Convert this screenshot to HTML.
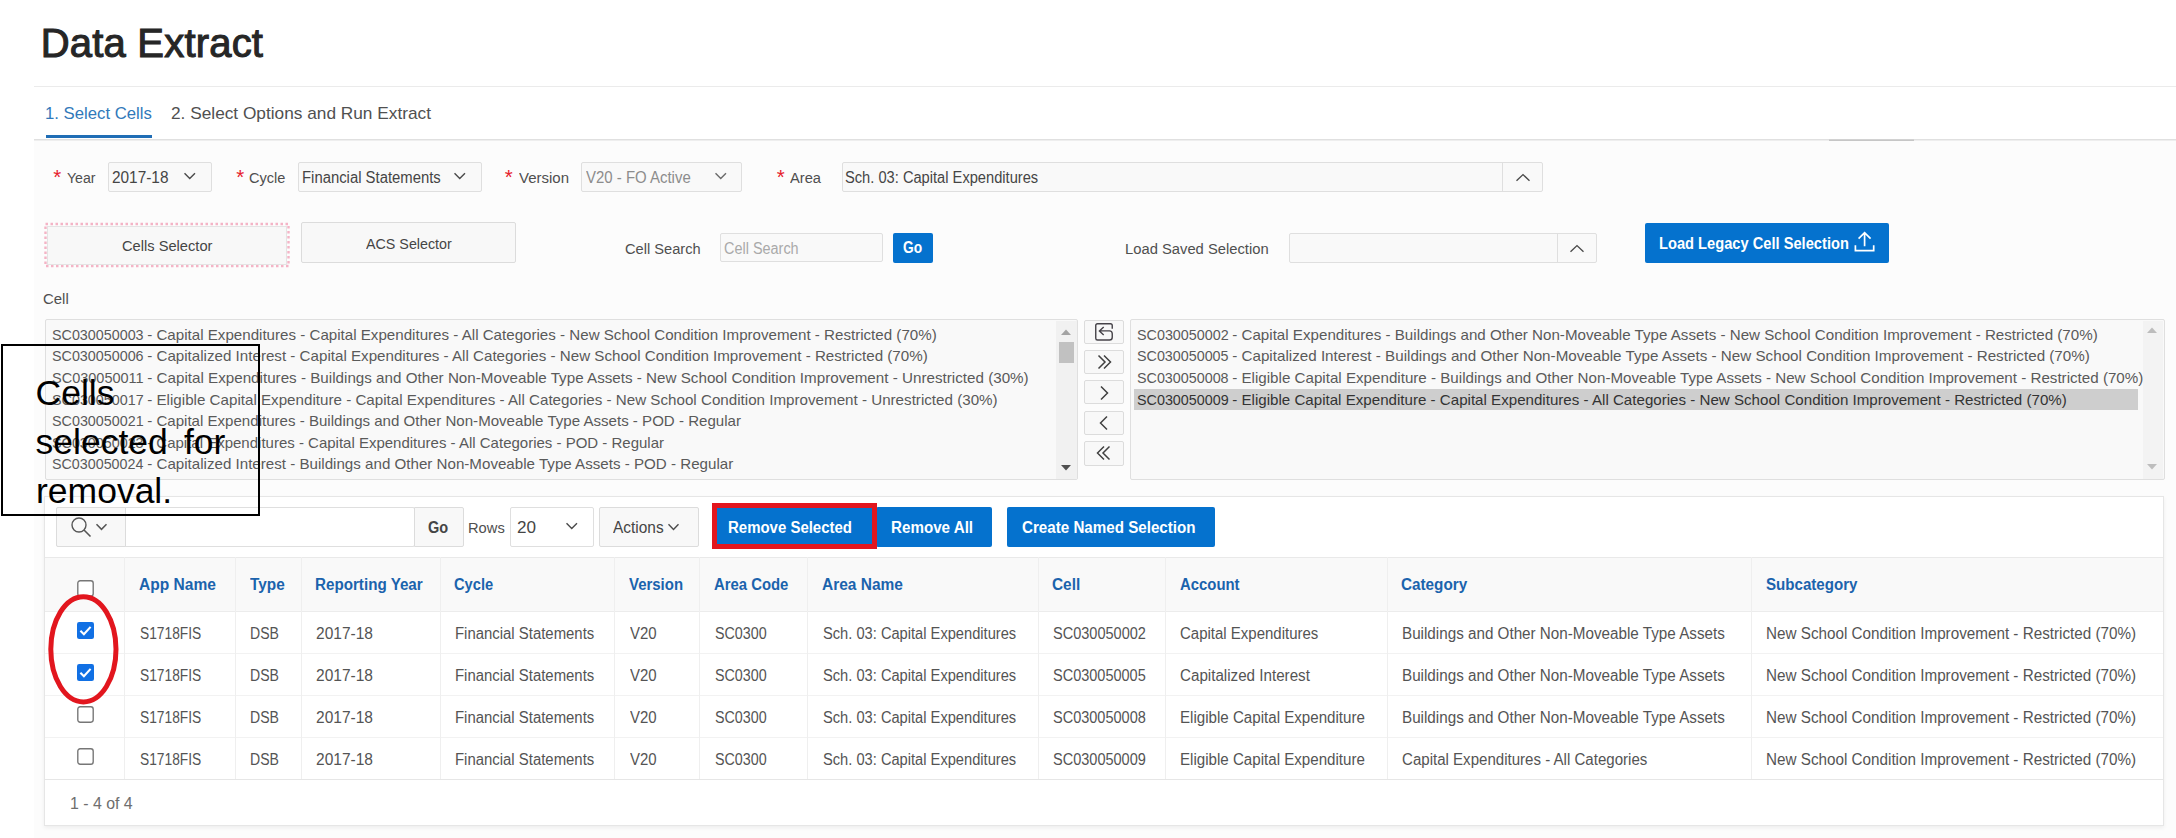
<!DOCTYPE html>
<html lang="en">
<head>
<meta charset="utf-8">
<title>Data Extract</title>
<style>
html,body{margin:0;padding:0;background:#fff;}
body{width:2176px;height:838px;position:relative;overflow:hidden;font-family:"Liberation Sans",sans-serif;}
.t{position:absolute;white-space:nowrap;display:block;transform-origin:0 50%;}
h1.t{margin:0;font-weight:normal;}
.b{position:absolute;box-sizing:border-box;}
.fld{background:#f9f9f9;border:1px solid #dfdfdf;border-radius:2px;}
.btn{background:#f8f8f8;border:1px solid #dcdcdc;border-radius:2px;}
.hot{background:#0572ce;border-radius:2px;}
svg{position:absolute;overflow:visible;}
</style>
</head>
<body>
<div class="b " style="left:34px;top:140px;width:2142px;height:698px;background:#fcfcfc;"></div>
<div class="b " style="left:34px;top:86px;width:2142px;height:1px;background:#ebebeb;"></div>
<div class="b " style="left:34px;top:139px;width:2142px;height:1px;background:#e0e0e0;"></div>
<div class="b " style="left:34px;top:140px;width:2142px;height:1px;background:#eeeeee;"></div>
<h1 class="t" style="left:40.72px;top:15.00px;font-size:40px;line-height:56px;color:#262626;letter-spacing:0.198px;-webkit-text-stroke:1.05px #262626;">Data Extract</h1>
<span class="t" style="left:44.73px;top:101.50px;font-size:17px;line-height:24px;color:#3179ba;transform:scaleX(0.9835);">1. Select Cells</span>
<span class="t" style="left:171.14px;top:101.50px;font-size:17px;line-height:24px;color:#505050;transform:scaleX(1.0152);">2. Select Options and Run Extract</span>
<div class="b " style="left:45.5px;top:135.2px;width:106.5px;height:3.0px;background:#1f6db5;"></div>
<div class="b " style="left:1829px;top:139px;width:85px;height:1px;background:#d2d2d2;"></div>
<div class="b " style="left:1829px;top:140px;width:85px;height:1px;background:#c6c6c6;"></div>
<span class="t" style="left:53.17px;top:162.10px;font-size:20.5px;line-height:29px;color:#e6202c;">*</span>
<span class="t" style="left:66.69px;top:166.50px;font-size:15.5px;line-height:22px;color:#4f4f4f;transform:scaleX(0.9110);">Year</span>
<div class="b fld" style="left:107.5px;top:162px;width:104.0px;height:30px;"></div>
<span class="t" style="left:112.23px;top:166.50px;font-size:16px;line-height:22px;color:#454545;transform:scaleX(0.9610);">2017-18</span>
<svg style="left:184.25px;top:173.1px" width="11.5" height="6.2" viewBox="0 0 11.5 6.2"><path d="M0.5 0.3 L5.75 5.6000000000000005 L11.0 0.3" fill="none" stroke="#4a4a4a" stroke-width="1.4"/></svg>
<span class="t" style="left:236.17px;top:162.10px;font-size:20.5px;line-height:29px;color:#e6202c;">*</span>
<span class="t" style="left:249.27px;top:166.50px;font-size:15.5px;line-height:22px;color:#4f4f4f;transform:scaleX(0.9385);">Cycle</span>
<div class="b fld" style="left:298px;top:162px;width:183.5px;height:30px;"></div>
<span class="t" style="left:301.78px;top:166.50px;font-size:16px;line-height:22px;color:#454545;transform:scaleX(0.9287);">Financial Statements</span>
<svg style="left:454.25px;top:173.1px" width="11.5" height="6.2" viewBox="0 0 11.5 6.2"><path d="M0.5 0.3 L5.75 5.6000000000000005 L11.0 0.3" fill="none" stroke="#4a4a4a" stroke-width="1.4"/></svg>
<span class="t" style="left:504.67px;top:162.10px;font-size:20.5px;line-height:29px;color:#e6202c;">*</span>
<span class="t" style="left:518.94px;top:166.50px;font-size:15.5px;line-height:22px;color:#4f4f4f;transform:scaleX(0.9676);">Version</span>
<div class="b fld" style="left:581px;top:162px;width:161px;height:30px;"></div>
<span class="t" style="left:585.94px;top:166.50px;font-size:16px;line-height:22px;color:#8c8c8c;transform:scaleX(0.9347);">V20 - FO Active</span>
<svg style="left:714.75px;top:173.1px" width="11.5" height="6.2" viewBox="0 0 11.5 6.2"><path d="M0.5 0.3 L5.75 5.6000000000000005 L11.0 0.3" fill="none" stroke="#6a6a6a" stroke-width="1.4"/></svg>
<span class="t" style="left:776.67px;top:162.10px;font-size:20.5px;line-height:29px;color:#e6202c;">*</span>
<span class="t" style="left:789.97px;top:166.50px;font-size:15.5px;line-height:22px;color:#4f4f4f;transform:scaleX(0.9474);">Area</span>
<div class="b fld" style="left:841.5px;top:162px;width:701.0px;height:30px;"></div>
<div class="b " style="left:1502px;top:162px;width:1px;height:30px;background:#dfdfdf;"></div>
<span class="t" style="left:845.34px;top:166.50px;font-size:16px;line-height:22px;color:#454545;transform:scaleX(0.9165);">Sch. 03: Capital Expenditures</span>
<svg style="left:1515.5px;top:173.5px" width="14" height="7" viewBox="0 0 14 7"><path d="M0.5 6.7 L7.0 0.6 L13.5 6.7" fill="none" stroke="#4a4a4a" stroke-width="1.4"/></svg>
<svg style="left:43px;top:221px" width="250" height="48" viewBox="43 221 250 48"><rect x="45.5" y="224" width="243" height="42" fill="none" stroke="#f4b4c6" stroke-width="2.4" stroke-dasharray="2.5 2.5"/></svg>
<div class="b " style="left:47px;top:225.5px;width:240px;height:39.0px;background:#f8f8f8;border:1px solid #e4e4e4;"></div>
<span class="t" style="left:122.27px;top:235.00px;font-size:15.5px;line-height:22px;color:#454545;transform:scaleX(0.9461);">Cells Selector</span>
<div class="b btn" style="left:300.5px;top:222px;width:215.5px;height:40.5px;"></div>
<span class="t" style="left:365.97px;top:232.50px;font-size:15.5px;line-height:22px;color:#454545;transform:scaleX(0.9218);">ACS Selector</span>
<span class="t" style="left:625.27px;top:237.50px;font-size:15.5px;line-height:22px;color:#4f4f4f;transform:scaleX(0.9444);">Cell Search</span>
<div class="b fld" style="left:720px;top:232.5px;width:163px;height:29.5px;"></div>
<span class="t" style="left:724.28px;top:237.50px;font-size:16px;line-height:22px;color:#a9a9a9;transform:scaleX(0.9026);">Cell Search</span>
<div class="b hot" style="left:893px;top:232.5px;width:40px;height:30.0px;"></div>
<span class="t" style="left:903.43px;top:236.50px;font-size:16px;line-height:22px;color:#ffffff;transform:scaleX(0.8600);font-weight:bold;">Go</span>
<span class="t" style="left:1124.79px;top:237.50px;font-size:15.5px;line-height:22px;color:#4f4f4f;transform:scaleX(0.9526);">Load Saved Selection</span>
<div class="b fld" style="left:1288.5px;top:232.5px;width:308.5px;height:30.0px;"></div>
<div class="b " style="left:1557px;top:232.5px;width:1px;height:30.0px;background:#dfdfdf;"></div>
<svg style="left:1570.0px;top:244.5px" width="14" height="7" viewBox="0 0 14 7"><path d="M0.5 6.7 L7.0 0.6 L13.5 6.7" fill="none" stroke="#4a4a4a" stroke-width="1.4"/></svg>
<div class="b hot" style="left:1644.5px;top:222.5px;width:244.5px;height:40.0px;"></div>
<span class="t" style="left:1659.03px;top:232.50px;font-size:16px;line-height:22px;color:#ffffff;transform:scaleX(0.9165);font-weight:bold;">Load Legacy Cell Selection</span>
<svg style="left:1854px;top:231px" width="22" height="22" viewBox="0 0 22 22"><path d="M10.6 15.2 V1.8 M4.6 7.6 L10.6 1.6 L16.6 7.6 M1.4 14.3 V19.6 H19.7 V14.3" fill="none" stroke="#fff" stroke-width="1.7"/></svg>
<span class="t" style="left:43.25px;top:288.40px;font-size:15px;line-height:21px;color:#4f4f4f;transform:scaleX(0.9956);">Cell</span>
<div class="b fld" style="left:44.5px;top:319px;width:1033.5px;height:160.5px;"></div>
<span class="t" style="left:51.66px;top:323.80px;font-size:15px;line-height:21px;color:#5a5a5a;transform:scaleX(0.9546)">SC030050003</span><span class="t" style="left:143.22px;top:323.80px;font-size:15px;line-height:21px;color:#5a5a5a;transform:scaleX(1.0085);white-space:pre"> - Capital Expenditures - Capital Expenditures - All Categories - New School Condition Improvement - Restricted (70%)</span>
<span class="t" style="left:51.66px;top:345.40px;font-size:15px;line-height:21px;color:#5a5a5a;transform:scaleX(0.9546)">SC030050006</span><span class="t" style="left:143.22px;top:345.40px;font-size:15px;line-height:21px;color:#5a5a5a;transform:scaleX(1.0099);white-space:pre"> - Capitalized Interest - Capital Expenditures - All Categories - New School Condition Improvement - Restricted (70%)</span>
<span class="t" style="left:51.65px;top:367.00px;font-size:15px;line-height:21px;color:#5a5a5a;transform:scaleX(0.9668)">SC030050011</span><span class="t" style="left:143.30px;top:367.00px;font-size:15px;line-height:21px;color:#5a5a5a;transform:scaleX(1.0130);white-space:pre"> - Capital Expenditures - Buildings and Other Non-Moveable Type Assets - New School Condition Improvement - Unrestricted (30%)</span>
<span class="t" style="left:51.65px;top:388.60px;font-size:15px;line-height:21px;color:#5a5a5a;transform:scaleX(0.9557)">SC030050017</span><span class="t" style="left:143.33px;top:388.60px;font-size:15px;line-height:21px;color:#5a5a5a;transform:scaleX(1.0109);white-space:pre"> - Eligible Capital Expenditure - Capital Expenditures - All Categories - New School Condition Improvement - Unrestricted (30%)</span>
<span class="t" style="left:51.66px;top:410.20px;font-size:15px;line-height:21px;color:#5a5a5a;transform:scaleX(0.9554)">SC030050021</span><span class="t" style="left:143.30px;top:410.20px;font-size:15px;line-height:21px;color:#5a5a5a;transform:scaleX(1.0049);white-space:pre"> - Capital Expenditures - Buildings and Other Non-Moveable Type Assets - POD - Regular</span>
<span class="t" style="left:51.66px;top:431.80px;font-size:15px;line-height:21px;color:#5a5a5a;transform:scaleX(0.9546)">SC030050023</span><span class="t" style="left:143.22px;top:431.80px;font-size:15px;line-height:21px;color:#5a5a5a;transform:scaleX(0.9999);white-space:pre"> - Capital Expenditures - Capital Expenditures - All Categories - POD - Regular</span>
<span class="t" style="left:51.66px;top:453.40px;font-size:15px;line-height:21px;color:#5a5a5a;transform:scaleX(0.9525)">SC030050024</span><span class="t" style="left:143.02px;top:453.40px;font-size:15px;line-height:21px;color:#5a5a5a;transform:scaleX(1.0089);white-space:pre"> - Capitalized Interest - Buildings and Other Non-Moveable Type Assets - POD - Regular</span>
<div class="b " style="left:1056px;top:320.5px;width:21px;height:158.0px;background:#f1f1f1;"></div>
<div class="b " style="left:1058.5px;top:341.5px;width:15.5px;height:21.0px;background:#c1c1c1;"></div>
<svg style="left:1061px;top:328.5px" width="10" height="6" viewBox="0 0 10 6"><path d="M0 6 L5 0.5 L10 6Z" fill="#a3a3a3"/></svg>
<svg style="left:1061px;top:464.5px" width="10" height="6" viewBox="0 0 10 6"><path d="M0 0 L5 5.5 L10 0Z" fill="#505050"/></svg>
<div class="b btn" style="left:1083.5px;top:319.5px;width:40.0px;height:24.0px;"></div>
<div class="b btn" style="left:1083.5px;top:349.5px;width:40.0px;height:24.0px;"></div>
<div class="b btn" style="left:1083.5px;top:380px;width:40.0px;height:24px;"></div>
<div class="b btn" style="left:1083.5px;top:410.5px;width:40.0px;height:24.0px;"></div>
<div class="b btn" style="left:1083.5px;top:441px;width:40.0px;height:24.5px;"></div>
<svg style="left:1095px;top:322.5px" width="18" height="18" viewBox="0 0 18 18"><path d="M17.25 5.7 V2.5 Q17.25 0.75 15.5 0.75 H2.5 Q0.75 0.75 0.75 2.5 V15.2 Q0.75 17 2.5 17 H14.5 Q17.25 17 17.25 14.2 V10.8 Q17.25 7.9 14.5 7.9 H4.6 M8.7 3.9 L4.4 7.9 L8.7 12" fill="none" stroke="#454248" stroke-width="1.4"/></svg>
<svg style="left:1095.7px;top:353.8px" width="16" height="16" viewBox="0 0 16 16"><path d="M2.5 1.5 L9 8 L2.5 14.5 M8 1.5 L14.5 8 L8 14.5" fill="none" stroke="#404040" stroke-width="1.5"/></svg>
<svg style="left:1095.8px;top:384.6px" width="16" height="16" viewBox="0 0 16 16"><path d="M5 1.5 L11.5 8 L5 14.5" fill="none" stroke="#404040" stroke-width="1.5"/></svg>
<svg style="left:1096.0px;top:414.8px" width="16" height="16" viewBox="0 0 16 16"><path d="M11 1.5 L4.5 8 L11 14.5" fill="none" stroke="#404040" stroke-width="1.5"/></svg>
<svg style="left:1095.8px;top:445.3px" width="16" height="16" viewBox="0 0 16 16"><path d="M13.5 1.5 L7 8 L13.5 14.5 M8 1.5 L1.5 8 L8 14.5" fill="none" stroke="#404040" stroke-width="1.5"/></svg>
<div class="b fld" style="left:1130px;top:319px;width:1035px;height:160.5px;"></div>
<div class="b " style="left:1134px;top:389px;width:1004px;height:21px;background:#cecece;"></div>
<span class="t" style="left:1136.55px;top:323.80px;font-size:15px;line-height:21px;color:#5a5a5a;transform:scaleX(0.9557)">SC030050002</span><span class="t" style="left:1228.23px;top:323.80px;font-size:15px;line-height:21px;color:#5a5a5a;transform:scaleX(1.0102);white-space:pre"> - Capital Expenditures - Buildings and Other Non-Moveable Type Assets - New School Condition Improvement - Restricted (70%)</span>
<span class="t" style="left:1136.56px;top:345.40px;font-size:15px;line-height:21px;color:#5a5a5a;transform:scaleX(0.9543)">SC030050005</span><span class="t" style="left:1228.10px;top:345.40px;font-size:15px;line-height:21px;color:#5a5a5a;transform:scaleX(1.0128);white-space:pre"> - Capitalized Interest - Buildings and Other Non-Moveable Type Assets - New School Condition Improvement - Restricted (70%)</span>
<span class="t" style="left:1136.56px;top:367.00px;font-size:15px;line-height:21px;color:#5a5a5a;transform:scaleX(0.9546)">SC030050008</span><span class="t" style="left:1228.12px;top:367.00px;font-size:15px;line-height:21px;color:#5a5a5a;transform:scaleX(1.0103);white-space:pre"> - Eligible Capital Expenditure - Buildings and Other Non-Moveable Type Assets - New School Condition Improvement - Restricted (70%)</span>
<span class="t" style="left:1136.56px;top:388.60px;font-size:15px;line-height:21px;color:#333;transform:scaleX(0.9553)">SC030050009</span><span class="t" style="left:1228.18px;top:388.60px;font-size:15px;line-height:21px;color:#333;transform:scaleX(1.0081);white-space:pre"> - Eligible Capital Expenditure - Capital Expenditures - All Categories - New School Condition Improvement - Restricted (70%)</span>
<div class="b " style="left:2143px;top:320.5px;width:20px;height:158.0px;background:#f3f3f3;"></div>
<svg style="left:2147px;top:327px" width="10" height="6" viewBox="0 0 10 6"><path d="M0 6 L5 0.5 L10 6Z" fill="#bdbdbd"/></svg>
<svg style="left:2147px;top:464px" width="10" height="6" viewBox="0 0 10 6"><path d="M0 0 L5 5.5 L10 0Z" fill="#bdbdbd"/></svg>
<div class="b " style="left:44px;top:496px;width:2119.5px;height:330px;background:#fff;border:1px solid #e6e6e6;box-shadow:0 2px 4px rgba(0,0,0,.06);"></div>
<div class="b " style="left:55.5px;top:507px;width:359.5px;height:40px;background:#fff;border:1px solid #dfdfdf;border-radius:2px;"></div>
<div class="b " style="left:55.5px;top:507px;width:70.5px;height:40px;background:#f8f8f8;border:1px solid #dcdcdc;border-radius:2px 0 0 2px;"></div>
<svg style="left:70px;top:516px" width="22" height="22" viewBox="0 0 22 22"><circle cx="9" cy="9" r="7" fill="none" stroke="#555" stroke-width="1.4"/><path d="M14 14 L20.5 20.5" stroke="#555" stroke-width="1.6"/></svg>
<svg style="left:95.5px;top:524.0px" width="11" height="6" viewBox="0 0 11 6"><path d="M0.5 0.3 L5.5 5.4 L10.5 0.3" fill="none" stroke="#555" stroke-width="1.5"/></svg>
<div class="b " style="left:414px;top:507px;width:50px;height:40px;background:#f8f8f8;border:1px solid #dcdcdc;border-radius:0 2px 2px 0;"></div>
<span class="t" style="left:428.40px;top:516.50px;font-size:16px;line-height:22px;color:#454545;transform:scaleX(0.9072);font-weight:bold;">Go</span>
<span class="t" style="left:467.80px;top:516.50px;font-size:15.5px;line-height:22px;color:#4f4f4f;transform:scaleX(0.9476);">Rows</span>
<div class="b " style="left:510px;top:507px;width:83.5px;height:40px;background:#fff;border:1px solid #dfdfdf;border-radius:2px;"></div>
<span class="t" style="left:517.15px;top:516.50px;font-size:16px;line-height:22px;color:#454545;transform:scaleX(1.0681);">20</span>
<svg style="left:565.75px;top:523.4px" width="11.5" height="6.2" viewBox="0 0 11.5 6.2"><path d="M0.5 0.3 L5.75 5.6000000000000005 L11.0 0.3" fill="none" stroke="#4a4a4a" stroke-width="1.4"/></svg>
<div class="b btn" style="left:599px;top:507px;width:100px;height:40px;"></div>
<span class="t" style="left:612.97px;top:516.50px;font-size:16px;line-height:22px;color:#454545;transform:scaleX(0.9642);">Actions</span>
<svg style="left:668.0px;top:523.5px" width="11" height="6" viewBox="0 0 11 6"><path d="M0.5 0.3 L5.5 5.4 L10.5 0.3" fill="none" stroke="#4a4a4a" stroke-width="1.4"/></svg>
<div class="b hot" style="left:714px;top:506px;width:162px;height:41px;"></div>
<span class="t" style="left:728.01px;top:516.50px;font-size:16px;line-height:22px;color:#fff;transform:scaleX(0.9356);font-weight:bold;">Remove Selected</span>
<div class="b hot" style="left:876px;top:507px;width:115.5px;height:40px;"></div>
<span class="t" style="left:891.00px;top:516.50px;font-size:16px;line-height:22px;color:#fff;transform:scaleX(0.9482);font-weight:bold;">Remove All</span>
<div class="b hot" style="left:1007px;top:507px;width:208px;height:40px;"></div>
<span class="t" style="left:1022.38px;top:516.50px;font-size:16px;line-height:22px;color:#fff;transform:scaleX(0.9475);font-weight:bold;">Create Named Selection</span>
<div class="b " style="left:711.5px;top:503px;width:165.0px;height:46px;border:5px solid #e2161e;"></div>
<div class="b " style="left:45px;top:557px;width:2118px;height:55px;background:#f9f9f9;border-top:1px solid #e9e9e9;border-bottom:1px solid #ececec;"></div>
<div class="b " style="left:45px;top:652.5px;width:2118px;height:1.0px;background:#f2f2f2;"></div>
<div class="b " style="left:45px;top:694.5px;width:2118px;height:1.0px;background:#f2f2f2;"></div>
<div class="b " style="left:45px;top:736.5px;width:2118px;height:1.0px;background:#f2f2f2;"></div>
<div class="b " style="left:45px;top:778.5px;width:2118px;height:1.0px;background:#e6e6e6;"></div>
<div class="b " style="left:124.0px;top:557px;width:1.0px;height:222px;background:#efefef;"></div>
<div class="b " style="left:234.5px;top:557px;width:1.0px;height:222px;background:#efefef;"></div>
<div class="b " style="left:300.5px;top:557px;width:1.0px;height:222px;background:#efefef;"></div>
<div class="b " style="left:440.0px;top:557px;width:1.0px;height:222px;background:#efefef;"></div>
<div class="b " style="left:614.0px;top:557px;width:1.0px;height:222px;background:#efefef;"></div>
<div class="b " style="left:699.0px;top:557px;width:1.0px;height:222px;background:#efefef;"></div>
<div class="b " style="left:806.5px;top:557px;width:1.0px;height:222px;background:#efefef;"></div>
<div class="b " style="left:1038.0px;top:557px;width:1.0px;height:222px;background:#efefef;"></div>
<div class="b " style="left:1164.5px;top:557px;width:1.0px;height:222px;background:#efefef;"></div>
<div class="b " style="left:1386.5px;top:557px;width:1.0px;height:222px;background:#efefef;"></div>
<div class="b " style="left:1751.0px;top:557px;width:1.0px;height:222px;background:#efefef;"></div>
<span class="t" style="left:139.13px;top:574.00px;font-size:16px;line-height:22px;color:#1b63ad;transform:scaleX(0.9720);font-weight:bold;">App Name</span>
<span class="t" style="left:249.83px;top:574.00px;font-size:16px;line-height:22px;color:#1b63ad;transform:scaleX(0.9594);font-weight:bold;">Type</span>
<span class="t" style="left:315.00px;top:574.00px;font-size:16px;line-height:22px;color:#1b63ad;transform:scaleX(0.9489);font-weight:bold;">Reporting Year</span>
<span class="t" style="left:454.40px;top:574.00px;font-size:16px;line-height:22px;color:#1b63ad;transform:scaleX(0.9159);font-weight:bold;">Cycle</span>
<span class="t" style="left:628.91px;top:574.00px;font-size:16px;line-height:22px;color:#1b63ad;transform:scaleX(0.9344);font-weight:bold;">Version</span>
<span class="t" style="left:714.14px;top:574.00px;font-size:16px;line-height:22px;color:#1b63ad;transform:scaleX(0.9293);font-weight:bold;">Area Code</span>
<span class="t" style="left:821.63px;top:574.00px;font-size:16px;line-height:22px;color:#1b63ad;transform:scaleX(0.9677);font-weight:bold;">Area Name</span>
<span class="t" style="left:1052.37px;top:574.00px;font-size:16px;line-height:22px;color:#1b63ad;transform:scaleX(0.9613);font-weight:bold;">Cell</span>
<span class="t" style="left:1179.64px;top:574.00px;font-size:16px;line-height:22px;color:#1b63ad;transform:scaleX(0.9302);font-weight:bold;">Account</span>
<span class="t" style="left:1401.37px;top:574.00px;font-size:16px;line-height:22px;color:#1b63ad;transform:scaleX(0.9547);font-weight:bold;">Category</span>
<span class="t" style="left:1765.58px;top:574.00px;font-size:16px;line-height:22px;color:#1b63ad;transform:scaleX(0.9441);font-weight:bold;">Subcategory</span>
<span class="t" style="left:139.88px;top:622.50px;font-size:16px;line-height:22px;color:#545454;transform:scaleX(0.8607);">S1718FIS</span>
<span class="t" style="left:249.85px;top:622.50px;font-size:16px;line-height:22px;color:#545454;transform:scaleX(0.8780);">DSB</span>
<span class="t" style="left:316.22px;top:622.50px;font-size:16px;line-height:22px;color:#545454;transform:scaleX(0.9697);">2017-18</span>
<span class="t" style="left:455.28px;top:622.50px;font-size:16px;line-height:22px;color:#545454;transform:scaleX(0.9321);">Financial Statements</span>
<span class="t" style="left:630.44px;top:622.50px;font-size:16px;line-height:22px;color:#545454;transform:scaleX(0.9355);">V20</span>
<span class="t" style="left:714.86px;top:622.50px;font-size:16px;line-height:22px;color:#545454;transform:scaleX(0.8939);">SC0300</span>
<span class="t" style="left:822.84px;top:622.50px;font-size:16px;line-height:22px;color:#545454;transform:scaleX(0.9165);">Sch. 03: Capital Expenditures</span>
<span class="t" style="left:1053.35px;top:622.50px;font-size:16px;line-height:22px;color:#545454;transform:scaleX(0.9079);">SC030050002</span>
<span class="t" style="left:1180.25px;top:622.50px;font-size:16px;line-height:22px;color:#545454;transform:scaleX(0.9366);">Capital Expenditures</span>
<span class="t" style="left:1401.75px;top:622.50px;font-size:16px;line-height:22px;color:#545454;transform:scaleX(0.9509);">Buildings and Other Non-Moveable Type Assets</span>
<span class="t" style="left:1765.75px;top:622.50px;font-size:16px;line-height:22px;color:#545454;transform:scaleX(0.9526);">New School Condition Improvement - Restricted (70%)</span>
<span class="t" style="left:139.88px;top:664.50px;font-size:16px;line-height:22px;color:#545454;transform:scaleX(0.8607);">S1718FIS</span>
<span class="t" style="left:249.85px;top:664.50px;font-size:16px;line-height:22px;color:#545454;transform:scaleX(0.8780);">DSB</span>
<span class="t" style="left:316.22px;top:664.50px;font-size:16px;line-height:22px;color:#545454;transform:scaleX(0.9697);">2017-18</span>
<span class="t" style="left:455.28px;top:664.50px;font-size:16px;line-height:22px;color:#545454;transform:scaleX(0.9321);">Financial Statements</span>
<span class="t" style="left:630.44px;top:664.50px;font-size:16px;line-height:22px;color:#545454;transform:scaleX(0.9355);">V20</span>
<span class="t" style="left:714.86px;top:664.50px;font-size:16px;line-height:22px;color:#545454;transform:scaleX(0.8939);">SC0300</span>
<span class="t" style="left:822.84px;top:664.50px;font-size:16px;line-height:22px;color:#545454;transform:scaleX(0.9165);">Sch. 03: Capital Expenditures</span>
<span class="t" style="left:1053.35px;top:664.50px;font-size:16px;line-height:22px;color:#545454;transform:scaleX(0.9066);">SC030050005</span>
<span class="t" style="left:1180.24px;top:664.50px;font-size:16px;line-height:22px;color:#545454;transform:scaleX(0.9482);">Capitalized Interest</span>
<span class="t" style="left:1401.75px;top:664.50px;font-size:16px;line-height:22px;color:#545454;transform:scaleX(0.9509);">Buildings and Other Non-Moveable Type Assets</span>
<span class="t" style="left:1765.75px;top:664.50px;font-size:16px;line-height:22px;color:#545454;transform:scaleX(0.9526);">New School Condition Improvement - Restricted (70%)</span>
<span class="t" style="left:139.88px;top:706.50px;font-size:16px;line-height:22px;color:#545454;transform:scaleX(0.8607);">S1718FIS</span>
<span class="t" style="left:249.85px;top:706.50px;font-size:16px;line-height:22px;color:#545454;transform:scaleX(0.8780);">DSB</span>
<span class="t" style="left:316.22px;top:706.50px;font-size:16px;line-height:22px;color:#545454;transform:scaleX(0.9697);">2017-18</span>
<span class="t" style="left:455.28px;top:706.50px;font-size:16px;line-height:22px;color:#545454;transform:scaleX(0.9321);">Financial Statements</span>
<span class="t" style="left:630.44px;top:706.50px;font-size:16px;line-height:22px;color:#545454;transform:scaleX(0.9355);">V20</span>
<span class="t" style="left:714.86px;top:706.50px;font-size:16px;line-height:22px;color:#545454;transform:scaleX(0.8939);">SC0300</span>
<span class="t" style="left:822.84px;top:706.50px;font-size:16px;line-height:22px;color:#545454;transform:scaleX(0.9165);">Sch. 03: Capital Expenditures</span>
<span class="t" style="left:1053.35px;top:706.50px;font-size:16px;line-height:22px;color:#545454;transform:scaleX(0.9069);">SC030050008</span>
<span class="t" style="left:1179.76px;top:706.50px;font-size:16px;line-height:22px;color:#545454;transform:scaleX(0.9450);">Eligible Capital Expenditure</span>
<span class="t" style="left:1401.75px;top:706.50px;font-size:16px;line-height:22px;color:#545454;transform:scaleX(0.9509);">Buildings and Other Non-Moveable Type Assets</span>
<span class="t" style="left:1765.75px;top:706.50px;font-size:16px;line-height:22px;color:#545454;transform:scaleX(0.9526);">New School Condition Improvement - Restricted (70%)</span>
<span class="t" style="left:139.88px;top:748.50px;font-size:16px;line-height:22px;color:#545454;transform:scaleX(0.8607);">S1718FIS</span>
<span class="t" style="left:249.85px;top:748.50px;font-size:16px;line-height:22px;color:#545454;transform:scaleX(0.8780);">DSB</span>
<span class="t" style="left:316.22px;top:748.50px;font-size:16px;line-height:22px;color:#545454;transform:scaleX(0.9697);">2017-18</span>
<span class="t" style="left:455.28px;top:748.50px;font-size:16px;line-height:22px;color:#545454;transform:scaleX(0.9321);">Financial Statements</span>
<span class="t" style="left:630.44px;top:748.50px;font-size:16px;line-height:22px;color:#545454;transform:scaleX(0.9355);">V20</span>
<span class="t" style="left:714.86px;top:748.50px;font-size:16px;line-height:22px;color:#545454;transform:scaleX(0.8939);">SC0300</span>
<span class="t" style="left:822.84px;top:748.50px;font-size:16px;line-height:22px;color:#545454;transform:scaleX(0.9165);">Sch. 03: Capital Expenditures</span>
<span class="t" style="left:1053.35px;top:748.50px;font-size:16px;line-height:22px;color:#545454;transform:scaleX(0.9075);">SC030050009</span>
<span class="t" style="left:1179.76px;top:748.50px;font-size:16px;line-height:22px;color:#545454;transform:scaleX(0.9450);">Eligible Capital Expenditure</span>
<span class="t" style="left:1402.25px;top:748.50px;font-size:16px;line-height:22px;color:#545454;transform:scaleX(0.9414);">Capital Expenditures - All Categories</span>
<span class="t" style="left:1765.75px;top:748.50px;font-size:16px;line-height:22px;color:#545454;transform:scaleX(0.9526);">New School Condition Improvement - Restricted (70%)</span>
<svg style="left:77px;top:579.5px" width="17" height="17" viewBox="0 0 16 16"><rect x="0.75" y="0.75" width="14.5" height="14.5" rx="2.2" fill="#fff" stroke="#767676" stroke-width="1.3"/></svg>
<svg style="left:77px;top:621.7px" width="17" height="17" viewBox="0 0 16 16"><rect x="0" y="0" width="16" height="16" rx="2" fill="#1170e4"/><path d="M3.2 8.3 L6.5 11.5 L12.8 4.6" fill="none" stroke="#fff" stroke-width="2"/></svg>
<svg style="left:77px;top:663.7px" width="17" height="17" viewBox="0 0 16 16"><rect x="0" y="0" width="16" height="16" rx="2" fill="#1170e4"/><path d="M3.2 8.3 L6.5 11.5 L12.8 4.6" fill="none" stroke="#fff" stroke-width="2"/></svg>
<svg style="left:77px;top:705.7px" width="17" height="17" viewBox="0 0 16 16"><rect x="0.75" y="0.75" width="14.5" height="14.5" rx="2.2" fill="#fff" stroke="#767676" stroke-width="1.3"/></svg>
<svg style="left:77px;top:748px" width="17" height="17" viewBox="0 0 16 16"><rect x="0.75" y="0.75" width="14.5" height="14.5" rx="2.2" fill="#fff" stroke="#767676" stroke-width="1.3"/></svg>
<span class="t" style="left:69.79px;top:792.50px;font-size:16px;line-height:22px;color:#6e6e6e;transform:scaleX(0.9923);">1 - 4 of 4</span>
<svg style="left:46px;top:590px" width="76" height="118" viewBox="0 0 76 118"><ellipse cx="37.4" cy="59.3" rx="32.6" ry="52.6" fill="none" stroke="#e2161e" stroke-width="5"/></svg>
<div class="b " style="left:0.5px;top:343.5px;width:259.5px;height:172.5px;border:2px solid #000;"></div>
<span class="t" style="left:35.60px;top:370.90px;font-size:35.5px;line-height:44px;color:#000;">Cells</span>
<span class="t" style="left:35.60px;top:419.70px;font-size:35.5px;line-height:44px;color:#000;word-spacing:6.2px;">selected for</span>
<span class="t" style="left:36.00px;top:468.70px;font-size:35.5px;line-height:44px;color:#000;">removal.</span>
</body>
</html>
